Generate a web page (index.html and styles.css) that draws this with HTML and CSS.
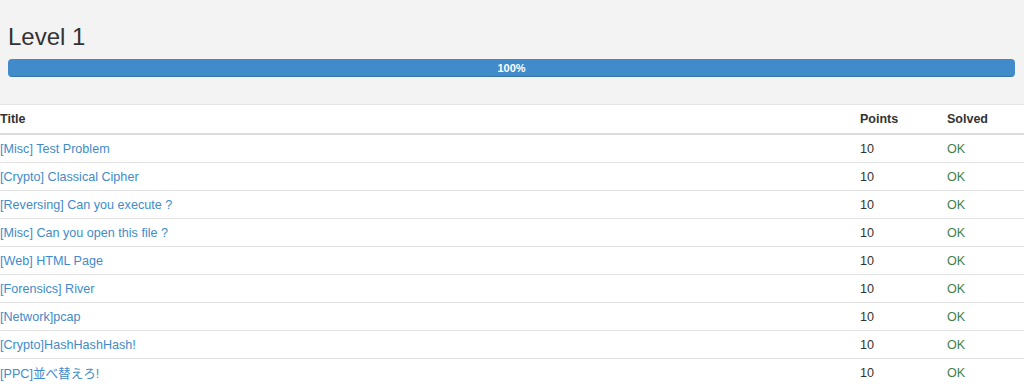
FILE: index.html
```html
<!DOCTYPE html>
<html>
<head>
<meta charset="utf-8">
<link rel="stylesheet" href="styles.css">
</head>
<body>
<div class="jumbo">
  <h3 class="level">Level 1</h3>
  <div class="progress"><div class="progress-bar" style="width:100%">100%</div></div>
</div>
<div class="table">
  <div class="row head"><div>Title</div><div>Points</div><div>Solved</div></div>
  <div class="row"><a href="#">[Misc] Test Problem</a><div>10</div><div class="ok">OK</div></div>
  <div class="row"><a href="#">[Crypto] Classical Cipher</a><div>10</div><div class="ok">OK</div></div>
  <div class="row"><a href="#">[Reversing] Can you execute ?</a><div>10</div><div class="ok">OK</div></div>
  <div class="row"><a href="#">[Misc] Can you open this file ?</a><div>10</div><div class="ok">OK</div></div>
  <div class="row"><a href="#">[Web] HTML Page</a><div>10</div><div class="ok">OK</div></div>
  <div class="row"><a href="#">[Forensics] River</a><div>10</div><div class="ok">OK</div></div>
  <div class="row"><a href="#">[Network]pcap</a><div>10</div><div class="ok">OK</div></div>
  <div class="row"><a href="#">[Crypto]HashHashHash!</a><div>10</div><div class="ok">OK</div></div>
  <div class="row"><a href="#">[PPC]並べ替えろ!</a><div>10</div><div class="ok">OK</div></div>
</div>
</body>
</html>
```
FILE: styles.css
```css
html, body {
  margin: 0;
  padding: 0;
  background: #fff;
  font-family: "Liberation Sans", Arial, "Noto Sans CJK JP", sans-serif;
  color: #333;
}
.jumbo {
  background: #f3f3f3;
  padding: 24px 9px 27px 8px;
  border-bottom: 1px solid #e3e3e3;
}
.level {
  margin: 0;
  font-size: 24px;
  font-weight: 500;
  line-height: 26px;
  color: #333;
}
.progress {
  margin-top: 9px;
  height: 18px;
  border-radius: 4px;
  background: #e8e8e8;
  overflow: hidden;
}
.progress-bar {
  height: 18px;
  background: #428bca;
  color: #fff;
  font-size: 11px;
  font-weight: bold;
  line-height: 18px;
  text-align: center;
  box-shadow: inset 0 -1px 0 rgba(0,0,0,0.15);
}
.table {
  font-size: 12.6px;
}
.row {
  display: grid;
  grid-template-columns: 860px 87px 1fr;
  height: 27px;
  align-items: center;
  border-bottom: 1px solid #e3e3e3;
}
.row.head {
  height: 28px;
  font-weight: bold;
  font-size: 12.5px;
  border-bottom: 2px solid #dcdcdc;
}
.row a {
  color: #428bca;
  text-decoration: none;
}
.ok {
  color: #44804a;
}
```
